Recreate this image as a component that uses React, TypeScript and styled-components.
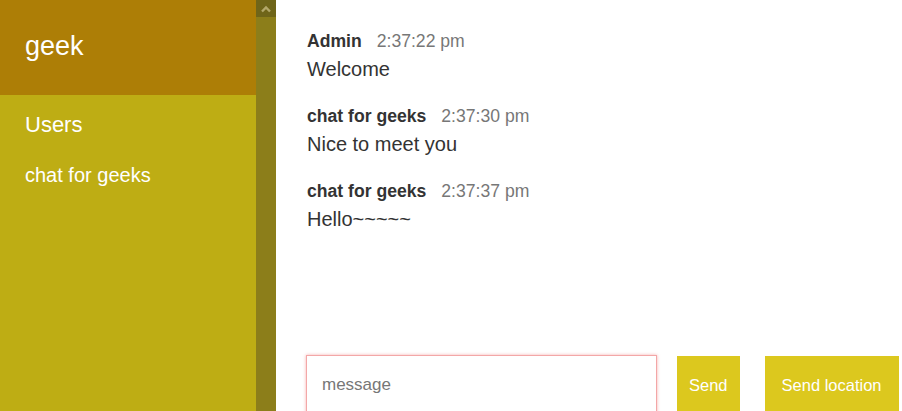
import { useEffect, useRef } from "react";
import styled, { createGlobalStyle } from "styled-components";

const messages = [
  { id: 1, user: "Admin", time: "2:37:22 pm", text: "Welcome" },
  { id: 2, user: "chat for geeks", time: "2:37:30 pm", text: "Nice to meet you" },
  { id: 3, user: "chat for geeks", time: "2:37:37 pm", text: "Hello~~~~~" },
];

const users = ["chat for geeks"];

const App = () => {
  const inputRef = useRef<HTMLInputElement>(null);

  useEffect(() => {
    inputRef.current?.focus({ preventScroll: true });
  }, []);

  return (
    <>
      <GlobalStyle />
      <Page>
        <Sidebar>
          <Room>geek</Room>
          <UsersTitle>Users</UsersTitle>
          <UserList>
            {users.map((u) => (
              <UserItem key={u}>{u}</UserItem>
            ))}
          </UserList>
        </Sidebar>
        <ScrollTrack>
          <ScrollButton>
            <svg width="12" height="8" viewBox="0 0 12 8">
              <path d="M2 6.5 L6 2.5 L10 6.5" fill="none" stroke="#b3a86a" strokeWidth="2.4" />
            </svg>
          </ScrollButton>
        </ScrollTrack>
        <Chat>
          <Messages>
            {messages.map((m) => (
              <Message key={m.id}>
                <Meta>
                  <Name>{m.user}</Name>
                  <Time>{m.time}</Time>
                </Meta>
                <Text>{m.text}</Text>
              </Message>
            ))}
          </Messages>
          <Compose>
            <Input ref={inputRef} placeholder="message" />
            <Button $pad={12}>Send</Button>
            <Button $pad={17} $gap={25}>Send location</Button>
          </Compose>
        </Chat>
      </Page>
    </>
  );
};
export default App;

const GlobalStyle = createGlobalStyle`
  html, body {
    margin: 0;
    padding: 0;
    overflow: hidden;
  }
  body {
    font-family: "Liberation Sans", Arial, sans-serif;
    background: #fff;
  }
`;

const Page = styled.div`
  display: flex;
  height: 411px;
  overflow: hidden;
`;

const Sidebar = styled.div`
  width: 256px;
  flex-shrink: 0;
  background: #bead14;
  color: #fff;
`;

const Room = styled.h2`
  margin: 0;
  height: 95px;
  box-sizing: border-box;
  padding: 30px 25px 0;
  background: #ad7e06;
  font-size: 27px;
  font-weight: 400;
  line-height: 32px;
`;

const UsersTitle = styled.h3`
  margin: 0;
  padding: 16px 25px 0;
  font-size: 22px;
  font-weight: 400;
  line-height: 28px;
`;

const UserList = styled.ul`
  list-style: none;
  margin: 0;
  padding: 24px 25px 0;
`;

const UserItem = styled.li`
  font-size: 20px;
  line-height: 24px;
`;

const ScrollTrack = styled.div`
  width: 20px;
  flex-shrink: 0;
  background: #8c7e1a;
`;

const ScrollButton = styled.div`
  height: 17px;
  background: #6f6519;
  display: flex;
  align-items: center;
  justify-content: center;
`;

const Chat = styled.div`
  flex: 1;
  display: flex;
  flex-direction: column;
  padding: 0 0 0 30px;
  min-width: 0;
  overflow: hidden;
`;

const Messages = styled.div`
  flex: 1;
  padding-top: 30px;
`;

const Message = styled.div`
  margin-bottom: 23px;
`;

const Meta = styled.p`
  margin: 0 0 4px;
  padding-left: 1px;
  line-height: 22px;
  font-size: 17.6px;
`;

const Name = styled.span`
  font-weight: 700;
  color: #333;
  margin-right: 15px;
`;

const Time = styled.span`
  color: #777;
`;

const Text = styled.p`
  margin: 0;
  padding-left: 1px;
  font-size: 20px;
  line-height: 26px;
  color: #333;
`;

const Compose = styled.div`
  display: flex;
  align-items: flex-start;
  height: 56px;
  flex-shrink: 0;
`;

const Input = styled.input`
  width: 351px;
  height: 60px;
  flex-shrink: 0;
  box-sizing: border-box;
  border: 1px solid #f3a7a7;
  box-shadow: 0 0 3px rgba(240, 120, 120, 0.6);
  outline: none;
  padding: 0 15px;
  font-family: "Liberation Sans", Arial, sans-serif;
  font-size: 17px;
  color: #333;
  &::placeholder {
    color: #777;
  }
`;

const Button = styled.button<{ $pad: number; $gap?: number }>`
  margin-left: ${(p) => p.$gap ?? 20}px;
  margin-top: 1px;
  height: 58px;
  flex-shrink: 0;
  padding: 0 ${(p) => p.$pad}px;
  border: none;
  background: #dcc81e;
  color: #fff;
  font-family: "Liberation Sans", Arial, sans-serif;
  font-size: 16.5px;
  cursor: pointer;
`;
